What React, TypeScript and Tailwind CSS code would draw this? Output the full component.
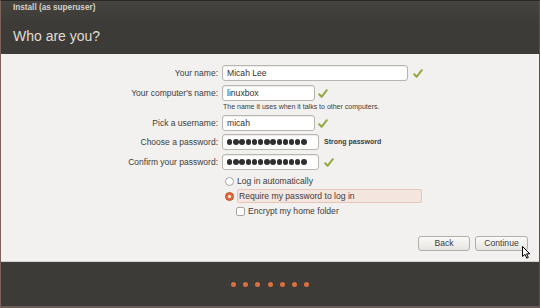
import React from "react";

const F = { fontFamily: '"Liberation Sans", Arial, sans-serif' };

function Check() {
  return (
    <svg width="10" height="9" viewBox="0 0 10 9" className="shrink-0">
      <path d="M1.2 5.2 L3.6 7.8 L8.8 1.2" fill="none" stroke="#93a940" strokeWidth="2" strokeLinecap="round" strokeLinejoin="round" />
    </svg>
  );
}

function Dots() {
  return (
    <div className="flex items-center gap-[0.8px]">
      {Array.from({ length: 13 }).map((_, i) => (
        <span key={i} className="w-[5.4px] h-[5.4px] rounded-full bg-[#2f2f2f]" />
      ))}
    </div>
  );
}

function Input({ w, children }: { w: string; children: React.ReactNode }) {
  return (
    <div
      className={`${w} h-[16px] bg-white border border-[#b9b6b0] rounded-[3px] flex items-center pl-[4px] text-[8.6px] text-[#333] shadow-[inset_0_1px_1px_rgba(0,0,0,0.08)]`}
    >
      {children}
    </div>
  );
}

function Row({ label, children, mt }: { label: string; children: React.ReactNode; mt: string }) {
  return (
    <div className={`flex items-center h-[16px] ${mt}`}>
      <div className="w-[217px] text-right text-[8.5px] text-[#3c3c3c] leading-none">{label}</div>
      <div className="ml-[4px] flex items-center">{children}</div>
    </div>
  );
}

export default function App() {
  return (
    <div
      style={F}
      className="w-[540px] h-[308px] overflow-hidden bg-[#3c3b37] flex flex-col border-l border-l-[#7c6259] border-b-2 border-b-[#6c5a54] border-r border-r-[#55524d] border-t border-t-[#2c2629] relative"
    >
      <div className="h-[53px] shrink-0 bg-gradient-to-b from-[#46443f] to-[#3c3b37] to-40% relative">
        <div className="absolute left-[12px] top-[2px] text-[8.2px] font-bold text-[#d6d3cc] leading-[10px]">
          Install (as superuser)
        </div>
        <div className="absolute left-[12px] top-[26px] text-[14px] text-[#e0dcd3] leading-[18px]">
          Who are you?
        </div>
      </div>
      <div className="h-[208px] shrink-0 bg-[#f2f1f0] border-b border-b-[#d4d2ce] flex flex-col pt-[11px]">
        <Row label="Your name:" mt="">
          <Input w="w-[186px]">Micah Lee</Input>
          <div className="ml-[5px]"><Check /></div>
        </Row>
        <Row label="Your computer's name:" mt="mt-[4px]">
          <Input w="w-[93px]">linuxbox</Input>
          <div className="ml-[3px]"><Check /></div>
        </Row>
        <div className="h-[14px] pl-[222px] text-[7px] text-[#3c3c3c] leading-[10px] pt-[1px]">
          The name it uses when it talks to other computers.
        </div>
        <Row label="Pick a username:" mt="">
          <Input w="w-[93px]">micah</Input>
          <div className="ml-[3px]"><Check /></div>
        </Row>
        <Row label="Choose a password:" mt="mt-[3px]">
          <Input w="w-[97px]"><Dots /></Input>
          <div className="ml-[5px] text-[7px] font-bold text-[#3c3c3c]">Strong password</div>
        </Row>
        <Row label="Confirm your password:" mt="mt-[4px]">
          <Input w="w-[97px]"><Dots /></Input>
          <div className="ml-[5px]"><Check /></div>
        </Row>
        <div className="flex items-center h-[14px] mt-[4px] pl-[224px]">
          <span className="w-[9px] h-[9px] rounded-full bg-white border border-[#a8a5a0]" />
          <span className="ml-[3px] text-[8.6px] text-[#3c3c3c]">Log in automatically</span>
        </div>
        <div className="flex items-center h-[14px] mt-[1px] pl-[224px]">
          <span className="w-[9px] h-[9px] rounded-full bg-[#e0683a] border border-[#c4552a] flex items-center justify-center">
            <span className="w-[3px] h-[3px] rounded-full bg-white" />
          </span>
          <div className="ml-[3px] w-[185px] h-[14px] bg-[#f5e5df] border border-[#e6c6b8] rounded-[2px] flex items-center pl-[1px] text-[8.6px] text-[#3c3c3c]">
            Require my password to log in
          </div>
        </div>
        <div className="flex items-center h-[14px] mt-[1px] pl-[235px]">
          <span className="w-[9px] h-[9px] rounded-[2px] bg-white border border-[#a8a5a0]" />
          <span className="ml-[3px] text-[8.6px] text-[#3c3c3c]">Encrypt my home folder</span>
        </div>
        <div className="flex justify-end mt-[18px] pr-[11px] gap-[5px]">
          <div className="w-[52px] h-[15px] rounded-[3px] border border-[#b2afa9] bg-gradient-to-b from-[#fbfaf9] to-[#e6e4e0] flex items-center justify-center text-[8.6px] text-[#3c3c3c]">
            Back
          </div>
          <div className="w-[53px] h-[15px] rounded-[3px] border border-[#b2afa9] bg-gradient-to-b from-[#fbfaf9] to-[#e6e4e0] flex items-center justify-center text-[8.6px] text-[#3c3c3c]">
            Continue
          </div>
        </div>
      </div>
      <div className="flex-1 flex items-center justify-center gap-[7.3px]">
        {Array.from({ length: 7 }).map((_, i) => (
          <span key={i} className="w-[5px] h-[5px] rounded-full bg-[#d9703f]" />
        ))}
      </div>
      <svg className="absolute left-[521px] top-[245px]" width="9" height="13" viewBox="0 0 9 13">
        <path d="M0.5 0.5 L0.5 10.5 L3 8.3 L4.8 12.2 L6.3 11.5 L4.6 7.8 L7.8 7.8 Z" fill="#fff" stroke="#000" strokeWidth="1" strokeLinejoin="round" />
      </svg>
    </div>
  );
}
